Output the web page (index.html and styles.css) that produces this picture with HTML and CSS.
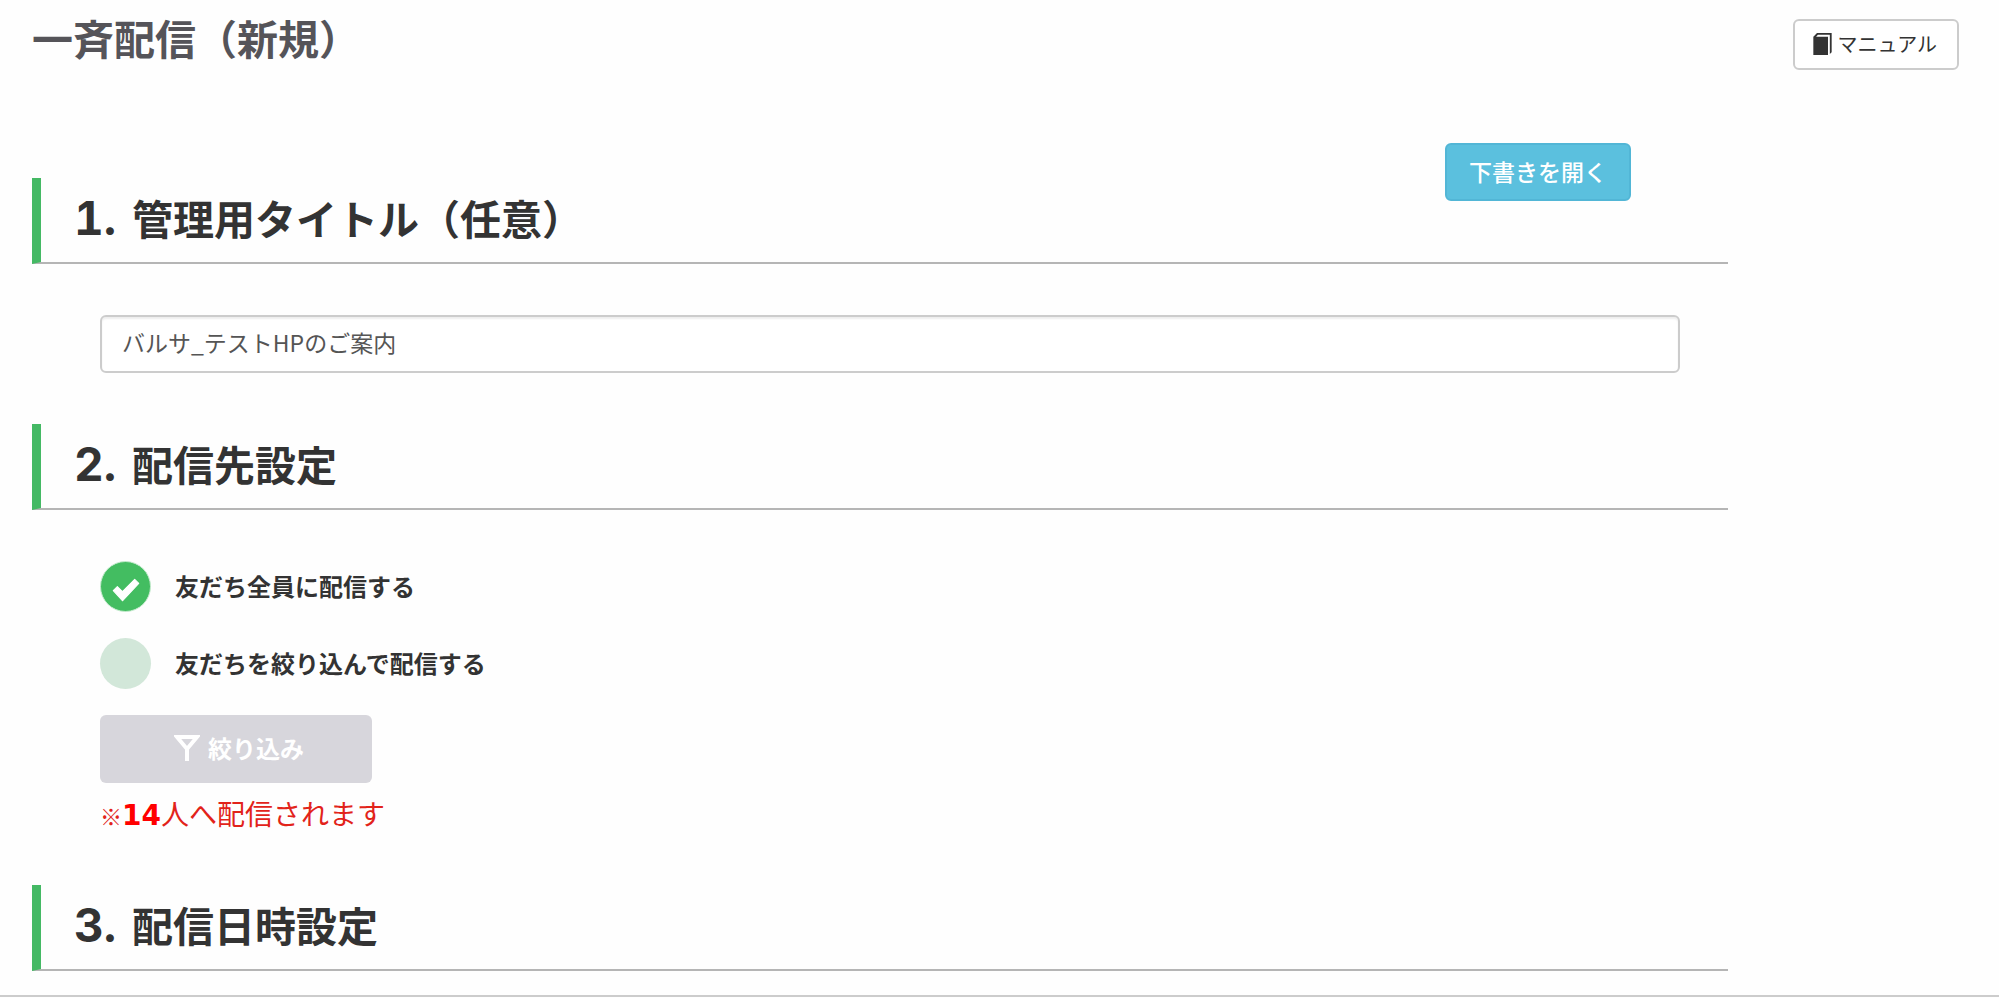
FILE: index.html
```html
<!DOCTYPE html>
<html lang="ja">
<head>
    <meta charset="UTF-8">
    <meta name="viewport" content="width=device-width, initial-scale=1.0">
    <title>一斉配信（新規）</title>
    <link rel="stylesheet" href="styles.css">
</head>
<body>
    <header class="page-header">
        <h1 class="page-title">一斉配信（新規）</h1>
        <button type="button" class="btn btn-manual">
            <svg class="icon-book" viewBox="0 0 20 24" aria-hidden="true">
                <path d="M0 4 L4 0 H20 V21 L18 23 V2 H5 L3 4 H16 V24 H0 Z" fill="#333"/>
            </svg>
            マニュアル
        </button>
    </header>

    <main class="content">
        <div class="actions">
            <button type="button" class="btn btn-draft">下書きを開く</button>
        </div>

        <section class="section">
            <h2 class="section-title" id="title-heading"><span class="number">1.</span>管理用タイトル（任意）</h2>
            <div class="section-body">
                <input type="text" class="text-input" aria-labelledby="title-heading" value="バルサ_テストHPのご案内">
            </div>
        </section>

        <section class="section">
            <h2 class="section-title"><span class="number">2.</span>配信先設定</h2>
            <div class="section-body targets">
                <label class="radio-row">
                    <input type="radio" class="radio" name="target" value="all" checked>
                    <svg class="check" viewBox="0 0 50 50" aria-hidden="true">
                        <path d="M13 29 L17 25 L22 30 L34 18 L38 22 L22 39 Z" fill="#fff" stroke="#fff" stroke-width="1" stroke-linejoin="round"/>
                    </svg>
                    <span class="radio-text">友だち全員に配信する</span>
                </label>
                <label class="radio-row">
                    <input type="radio" class="radio" name="target" value="filter">
                    <span class="radio-text">友だちを絞り込んで配信する</span>
                </label>
                <button type="button" class="btn btn-filter" disabled>
                    <svg class="icon-filter" viewBox="0 0 26 26" aria-hidden="true">
                        <path d="M3 2 H23 L13 14 Z M13 13 V26" fill="none" stroke="#fff" stroke-width="4"/>
                    </svg>
                    絞り込み
                </button>
                <p class="count"><span class="mark">※</span><strong>14</strong>人へ配信されます</p>
            </div>
        </section>

        <section class="section">
            <h2 class="section-title"><span class="number">3.</span>配信日時設定</h2>
        </section>
    </main>
    <footer class="page-footer"></footer>
</body>
</html>
```

FILE: styles.css
```css
* {
    box-sizing: border-box;
}

body {
    margin: 0;
    background-color: #fefefe;
    color: #333;
    font-family: "Noto Sans CJK JP", sans-serif;
    font-size: 24px;
    line-height: 32px;
}

.page-header {
    display: flex;
    justify-content: space-between;
    align-items: flex-start;
    padding: 7px 40px 0 32px;
}

.page-title {
    margin: 0;
    color: #555459;
    font-size: 41px;
    line-height: 60px;
}

.btn {
    display: flex;
    justify-content: center;
    align-items: center;
    gap: 8px;
    padding: 0 22px 2px;
    font-family: inherit;
    font-size: 24px;
    line-height: 32px;
    border-radius: 6px;
    cursor: pointer;
}

.btn-manual {
    gap: 6px;
    height: 51px;
    margin-top: 12px;
    padding: 0 20px 2px 18px;
    font-size: 20px;
    color: #333;
    background-color: #fff;
    border: 2px solid #ccc;
}

.icon-book {
    width: 19px;
    height: 22px;
}

.content {
    margin: 73px 271px 0 32px;
}

/* the button hangs over the first section title */
.actions {
    display: flex;
    justify-content: flex-end;
    height: 35px;
    padding-right: 97px;
}

.btn-draft {
    height: 58px;
    font-size: 23px;
    font-weight: 500;
    color: #fff;
    background-color: #5bc0de;
    border: 2px solid #52b6d6;
}

.section-title {
    display: flex;
    align-items: baseline;
    margin: 0;
    padding: 9px 0 15px 33px;
    font-size: 41px;
    line-height: 60px;
    border-left: 9px solid #44b964;
    border-bottom: 2px solid #b5b5b5;
}

.number {
    width: 58px;
    font-family: Inter, sans-serif;
    font-size: 46px;
    line-height: 1;
    font-variant-numeric: tabular-nums;
}

.section-body {
    padding: 51px 48px 51px 68px;
}

.text-input {
    display: block;
    width: 100%;
    height: 58px;
    padding: 0 20px 4px;
    font-family: inherit;
    font-size: 23px;
    color: #555;
    background-color: #fff;
    border: 2px solid #ccc;
    border-radius: 6px;
    box-shadow: inset 0 2px 2px rgba(0, 0, 0, 0.07);
}

.targets {
    display: flex;
    flex-direction: column;
    align-items: flex-start;
    gap: 26px;
}

.radio-row {
    position: relative;
    display: flex;
    align-items: center;
    gap: 24px;
    font-weight: bold;
}

.radio-text {
    padding-bottom: 2px;
}

.radio {
    appearance: none;
    width: 51px;
    height: 51px;
    margin: 0;
    background-color: #d2e7d9;
    border-radius: 50%;
}

.radio:checked {
    background-color: #43bd61;
    border: 1px solid #c5ebce;
}

.check {
    position: absolute;
    left: 0;
    top: 0;
    width: 51px;
    height: 51px;
}

.btn-filter {
    width: 272px;
    height: 68px;
    padding-left: 28px;
    font-weight: bold;
    color: #fff;
    background-color: #d7d6dc;
    border: none;
    cursor: default;
}

.icon-filter {
    width: 26px;
    height: 26px;
}

.count {
    margin: -17px 0 0;
    color: #e2231a;
    font-size: 28px;
    line-height: 42px;
}

.mark {
    font-size: 22px;
    font-weight: 500;
    line-height: 1;
}

.count strong {
    color: #f00;
    font-family: "DejaVu Sans", sans-serif;
    line-height: 1;
}

.page-footer {
    margin-top: 24px;
    border-top: 2px solid #ccc;
}
```
